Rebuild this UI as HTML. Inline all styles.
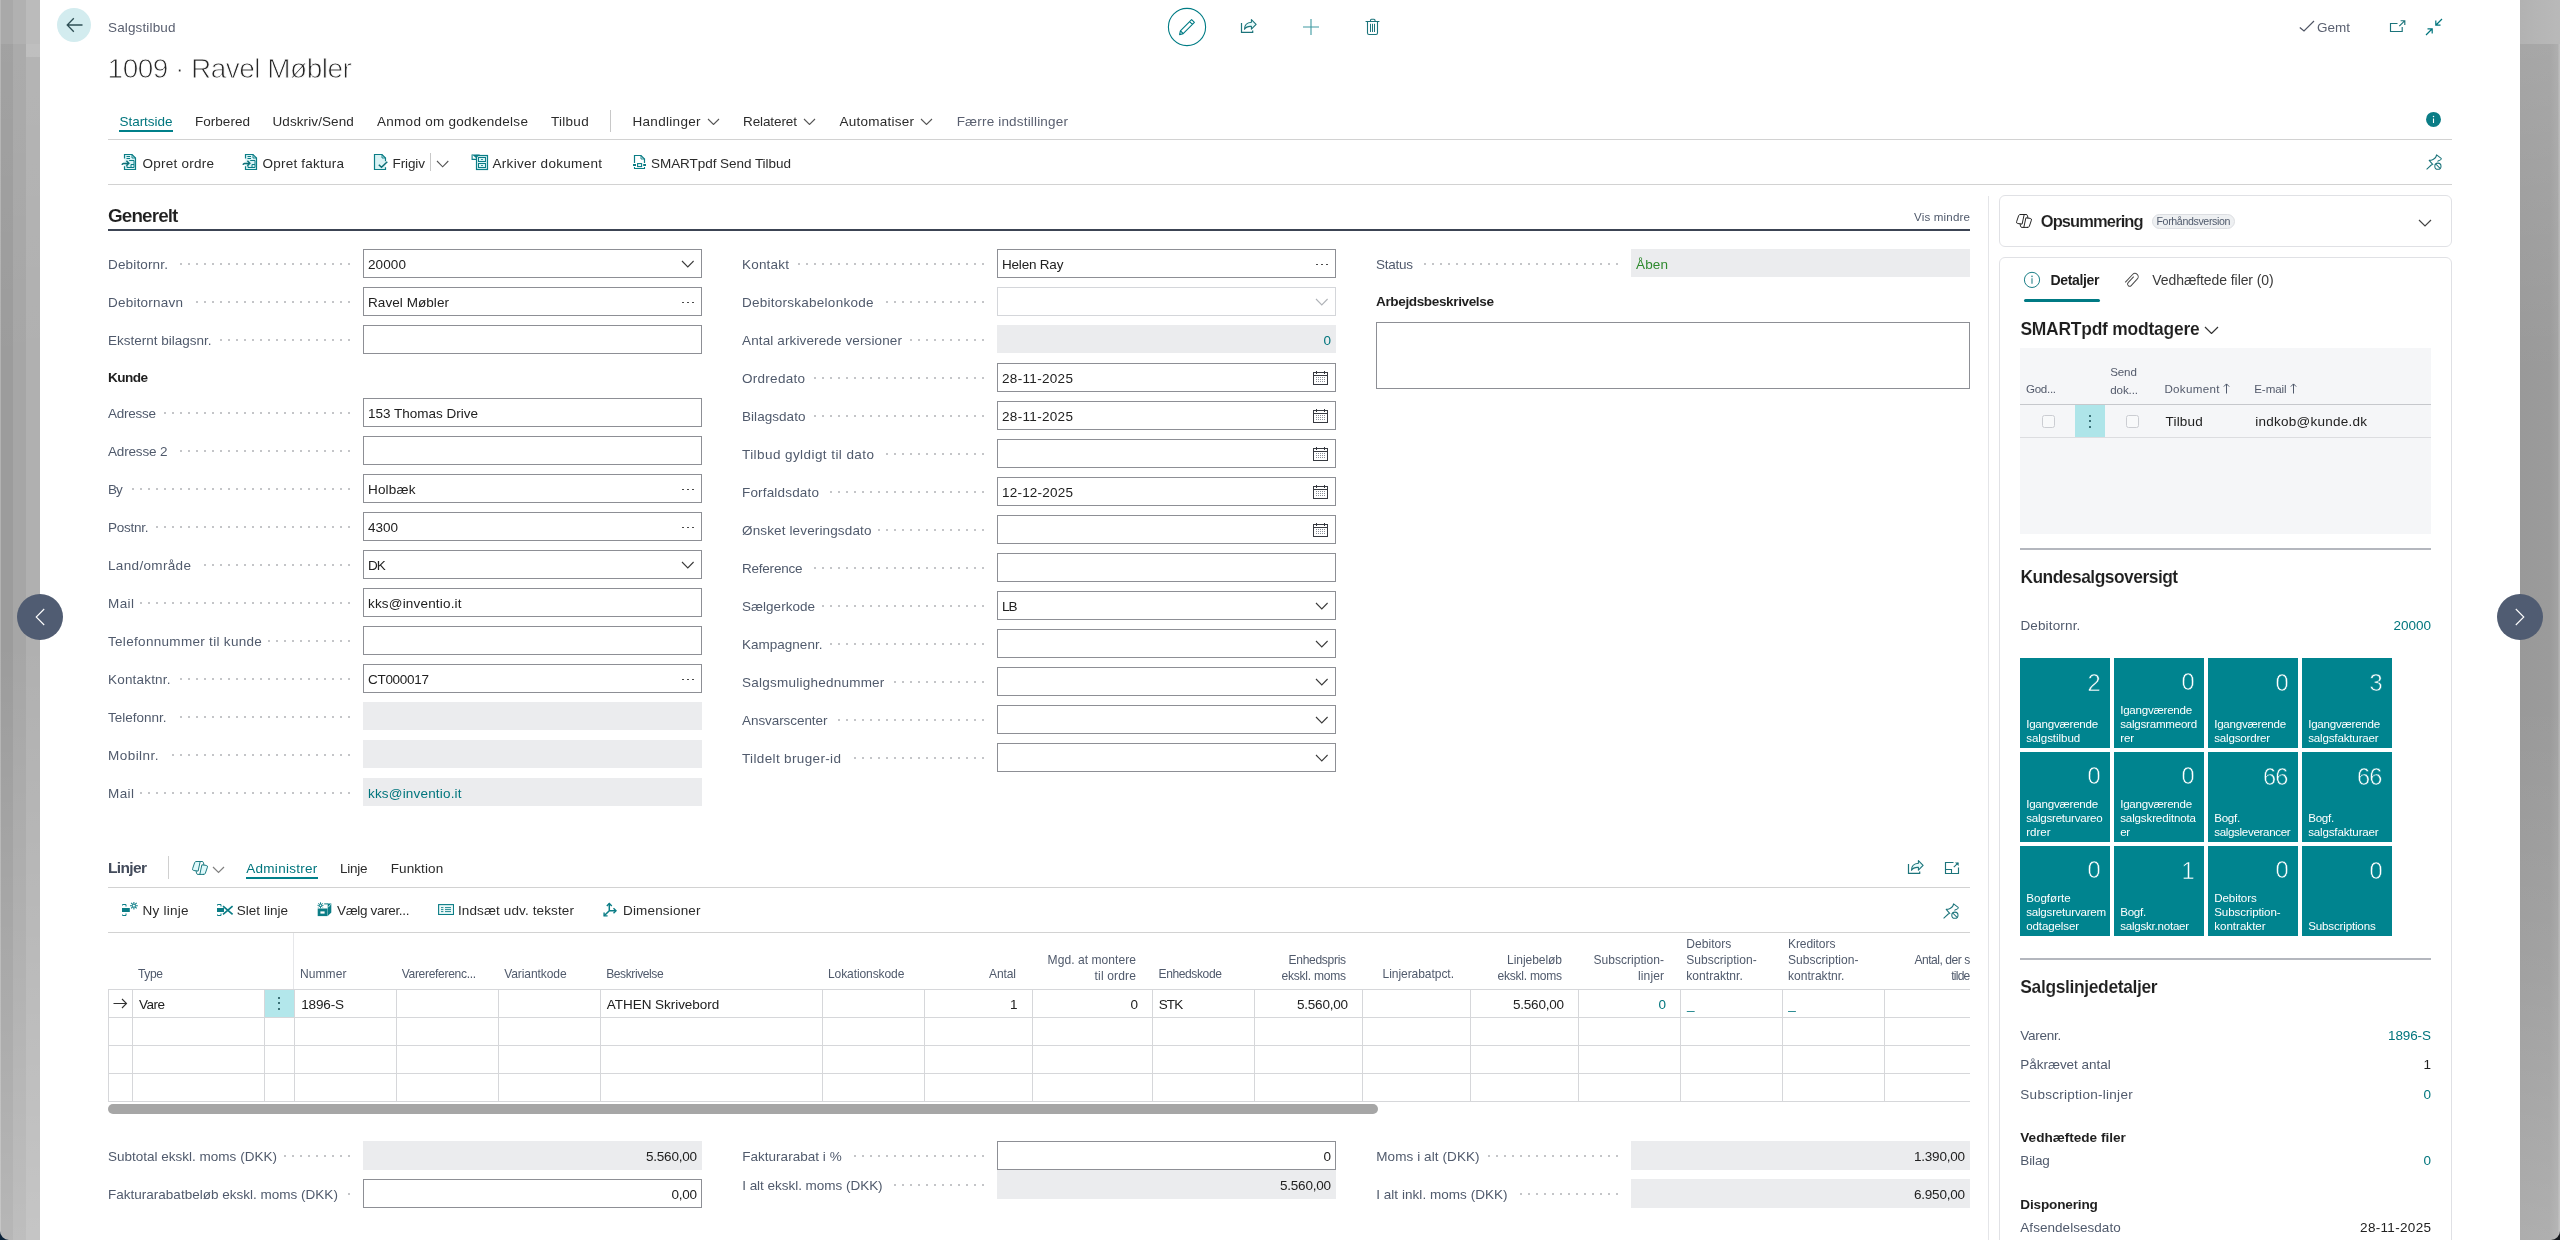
<!DOCTYPE html>
<html lang="da"><head><meta charset="utf-8"><title>Salgstilbud</title>
<style>
html,body{margin:0;padding:0;}
body{width:2560px;height:1240px;position:relative;overflow:hidden;background:#fff;font-family:"Liberation Sans",sans-serif;}
#pg{position:absolute;left:0;top:0;width:2560px;height:1240px;will-change:transform;transform:translateZ(0);}
.t{position:absolute;white-space:nowrap;margin:0;}
.r{position:absolute;box-sizing:border-box;}
.dl{background-image:radial-gradient(circle at 1px 1px,#c4c5c8 0.95px,rgba(255,255,255,0) 1.35px);background-size:8px 2px;background-repeat:repeat-x;}
</style></head><body><div id="pg">
<div class="r" style="left:0;top:0;width:40px;height:1240px;background:linear-gradient(90deg,#b2b2b2 0 1px,#9c9c9c 1px 13px,#a6a6a6 13px 26px,#b0b0b0 26px 40px);"></div>
<div class="r" style="left:0;top:0;width:40px;height:44px;background:linear-gradient(90deg,#b8b8b8 0 1px,#a9a9a9 1px 13px,#b1b1b1 13px 26px,#bbbbbb 26px 40px);"></div>
<div class="r" style="left:0;top:640px;width:40px;height:600px;background:linear-gradient(180deg,rgba(255,255,255,0),rgba(255,255,255,0.12) 50%,rgba(255,255,255,0.27));"></div>
<div class="r" style="left:26px;top:44px;width:14px;height:13px;background:#bbbbbb;"></div>
<div class="r" style="left:2520px;top:0;width:40px;height:1240px;background:linear-gradient(90deg,#999999 0,#9b9b9b 30px,#a3a3a3 38px,#b4b4b4 39px);"></div>
<div class="r" style="left:2520px;top:0;width:40px;height:44px;background:linear-gradient(90deg,#b2b2b2,#b9b9b9);"></div>
<div class="r" style="left:2520px;top:700px;width:40px;height:540px;background:linear-gradient(180deg,rgba(255,255,255,0),rgba(255,255,255,0.08) 50%,rgba(255,255,255,0.2));"></div>
<div class="r" style="left:2520px;top:44px;width:40px;height:330px;background:linear-gradient(180deg,rgba(255,255,255,0.13),rgba(255,255,255,0));"></div>
<div class="r" style="left:0;top:44px;width:40px;height:330px;background:linear-gradient(180deg,rgba(255,255,255,0.06),rgba(255,255,255,0));"></div>
<svg class="r" style="left:0px;top:1231px;" width="9" height="9" viewBox="0 0 9 9" fill="none"><path d="M0 0 A9 9 0 0 0 9 9 H0Z" fill="#0b2239"/></svg>
<svg class="r" style="left:2551px;top:1231px;" width="9" height="9" viewBox="0 0 9 9" fill="none"><path d="M9 0 A9 9 0 0 1 0 9 H9Z" fill="#15181d"/></svg>
<div class="r" style="left:57px;top:8px;width:34px;height:34px;background:#d3ecef;border-radius:17px;"></div>
<svg class="r" style="left:65.5px;top:17px;" width="18" height="16" viewBox="0 0 18 16" fill="none"><path d="M16.5 8H1.5M7.8 1.2L1.2 8L7.8 14.8" stroke="#2f4f55" stroke-width="1.3"/></svg>
<div class="t" style="top:18.00px;font-size:13.51px;line-height:20px;color:#5a6070;letter-spacing:0.140px;left:108.00px;">Salgstilbud</div>
<div class="t" style="top:48.00px;font-size:27.98px;line-height:42px;color:#262626;letter-spacing:-0.511px;left:107.60px;-webkit-text-stroke:0.85px #fff;">1009 · Ravel Møbler</div>
<svg class="r" style="left:1167px;top:7px;" width="40" height="40" viewBox="0 0 40 40" fill="none"><circle cx="20" cy="20" r="18.6" stroke="#007c85" stroke-width="1.1"/><path d="M24.6 12.6 L27.4 15.4 L16.2 26.6 L12.6 27.6 L13.4 23.8 Z M22.6 14.6 L25.4 17.4 M13.6 24 L16 26.4" stroke="#007c85" stroke-width="1.1" stroke-linejoin="round"/></svg>
<svg class="r" style="left:1240px;top:18px;" width="18" height="16" viewBox="0 0 18 16" fill="none"><path d="M1.5 5V14.4H12.7V12.4" stroke="#1c747b" stroke-width="1.2"/><path d="M11.4 1.6L16.1 6.3L11.4 11.2V8.4C8 8.2 5.8 9 4.5 11.3C4.5 7.5 7 4.6 11.4 4.3Z" stroke="#1c747b" stroke-width="1.1" stroke-linejoin="round" fill="#e6fafa"/></svg>
<svg class="r" style="left:1303px;top:19px;" width="16" height="16" viewBox="0 0 16 16" fill="none"><path d="M8 0V16M0 8H16" stroke="#3f9aa1" stroke-width="1.1"/></svg>
<svg class="r" style="left:1365px;top:18px;" width="15" height="18" viewBox="0 0 15 18" fill="none"><path d="M1 3.5H14M5.5 3.5V2.2Q5.5 1.2 6.5 1.2H9Q10 1.2 10 2.2V3.5M2.5 3.5V15Q2.5 16.5 4 16.5H11Q12.5 16.5 12.5 15V3.5" stroke="#1c747b" stroke-width="1.1" stroke-linecap="round"/><path d="M5.5 6.2V13.6M7.5 6.2V13.6M9.5 6.2V13.6" stroke="#1c747b" stroke-width="1" stroke-linecap="round"/></svg>
<svg class="r" style="left:2299px;top:20px;" width="16" height="12" viewBox="0 0 16 12" fill="none"><path d="M0.8 7.5L5 11L15 1" stroke="#4f5564" stroke-width="1.2"/></svg>
<div class="t" style="top:18.00px;font-size:13.51px;line-height:20px;color:#5a6070;letter-spacing:0.000px;left:2317.00px;">Gemt</div>
<svg class="r" style="left:2389px;top:19px;" width="17" height="14" viewBox="0 0 17 14" fill="none"><path d="M8.5 4.5H1.5V12.5H13.2V8" stroke="#1c747b" stroke-width="1.15"/><path d="M10.3 7.2L15.6 1.9M11.6 1.7H15.8V5.9" stroke="#1c747b" stroke-width="1.15"/></svg>
<svg class="r" style="left:2425px;top:18px;" width="18" height="18" viewBox="0 0 18 18" fill="none"><path d="M17 1L11 7M10.8 2.5V7.2H15.5" stroke="#00757d" stroke-width="1.2"/><path d="M1 17L7 11M2.5 10.8H7.2V15.5" stroke="#00757d" stroke-width="1.2"/></svg>
<div class="t" style="top:112.00px;font-size:13.51px;line-height:20px;color:#00757d;letter-spacing:-0.037px;left:119.50px;">Startside</div>
<div class="r" style="left:119px;top:130px;width:54px;height:2px;background:#00808a;"></div>
<div class="t" style="top:112.00px;font-size:13.51px;line-height:20px;color:#2b2b2b;letter-spacing:0.029px;left:195.00px;">Forbered</div>
<div class="t" style="top:112.00px;font-size:13.51px;line-height:20px;color:#2b2b2b;letter-spacing:0.091px;left:272.50px;">Udskriv/Send</div>
<div class="t" style="top:112.00px;font-size:13.51px;line-height:20px;color:#2b2b2b;letter-spacing:0.279px;left:377.00px;">Anmod om godkendelse</div>
<div class="t" style="top:112.00px;font-size:13.51px;line-height:20px;color:#2b2b2b;letter-spacing:0.280px;left:551.00px;">Tilbud</div>
<div class="r" style="left:610px;top:110px;width:1px;height:22px;background:#c8c8c8;"></div>
<div class="t" style="top:112.00px;font-size:13.51px;line-height:20px;color:#2b2b2b;letter-spacing:0.300px;left:632.50px;">Handlinger</div>
<svg class="r" style="left:706.5px;top:117.75px;" width="13" height="7.5" viewBox="0 0 13 7.5" fill="none"><path d="M1 1 L6.5 6.5 L12 1" stroke="#555" stroke-width="1.1"/></svg>
<div class="t" style="top:112.00px;font-size:13.51px;line-height:20px;color:#2b2b2b;letter-spacing:-0.100px;left:743.00px;">Relateret</div>
<svg class="r" style="left:803.0px;top:117.75px;" width="13" height="7.5" viewBox="0 0 13 7.5" fill="none"><path d="M1 1 L6.5 6.5 L12 1" stroke="#555" stroke-width="1.1"/></svg>
<div class="t" style="top:112.00px;font-size:13.51px;line-height:20px;color:#2b2b2b;letter-spacing:0.240px;left:839.50px;">Automatiser</div>
<svg class="r" style="left:920.0px;top:117.75px;" width="13" height="7.5" viewBox="0 0 13 7.5" fill="none"><path d="M1 1 L6.5 6.5 L12 1" stroke="#555" stroke-width="1.1"/></svg>
<div class="t" style="top:112.00px;font-size:13.51px;line-height:20px;color:#5a6070;letter-spacing:0.178px;left:956.70px;">Færre indstillinger</div>
<svg class="r" style="left:2425px;top:111px;" width="17" height="17" viewBox="0 0 17 17" fill="none"><circle cx="8.5" cy="8.4" r="7.5" fill="#0b7d86"/><path d="M8.5 7.5V12" stroke="#fff" stroke-width="1.1"/><circle cx="8.5" cy="5.5" r="0.75" fill="#fff"/></svg>
<div class="r" style="left:108px;top:139px;width:2344px;height:1px;background:#d2d2d2;"></div>
<svg class="r" style="left:121px;top:153px;" width="16" height="18" viewBox="0 0 16 18" fill="none"><path d="M3.5 5.5V1.5H11L14.5 5V16.5H3.5V13.2" stroke="#0b7d86" stroke-width="1.2" fill="#d9f3f5"/><path d="M11 1.5V5H14.5" stroke="#0b7d86" stroke-width="0.9"/><path d="M5.5 3.5H9M5.5 5.5H9" stroke="#0b7d86" stroke-width="1"/><path d="M8.2 7.5H13V14.5H6V12.8M10 14.5V11.5H13" stroke="#0b7d86" stroke-width="1"/><path d="M1 11.8C1.3 10.2 2.5 10.3 7.6 10.3M5.4 7.8L7.9 10.3L5.4 12.8" stroke="#0b6f77" stroke-width="1.4"/></svg>
<div class="t" style="top:154.00px;font-size:13.51px;line-height:20px;color:#2b2b2b;letter-spacing:0.240px;left:142.50px;">Opret ordre</div>
<svg class="r" style="left:241.5px;top:153px;" width="16" height="18" viewBox="0 0 16 18" fill="none"><path d="M3.5 5.5V1.5H11L14.5 5V16.5H3.5V13.2" stroke="#0b7d86" stroke-width="1.2" fill="#d9f3f5"/><path d="M11 1.5V5H14.5" stroke="#0b7d86" stroke-width="0.9"/><path d="M5.5 3.5H9M5.5 5.5H9" stroke="#0b7d86" stroke-width="1"/><path d="M8.2 7.5H13V14.5H6V12.8M10 14.5V11.5H13" stroke="#0b7d86" stroke-width="1"/><path d="M1 11.8C1.3 10.2 2.5 10.3 7.6 10.3M5.4 7.8L7.9 10.3L5.4 12.8" stroke="#0b6f77" stroke-width="1.4"/></svg>
<div class="t" style="top:154.00px;font-size:13.51px;line-height:20px;color:#2b2b2b;letter-spacing:0.217px;left:262.50px;">Opret faktura</div>
<svg class="r" style="left:373px;top:153px;" width="16" height="18" viewBox="0 0 16 18" fill="none"><path d="M12.5 8.3V5L9 1.5H1.5V16.5H12.5V14.2" stroke="#0b7d86" stroke-width="1.2" fill="#d9f3f5"/><path d="M9 1.5V5H12.5" stroke="#0b7d86" stroke-width="0.9"/><path d="M5.8 11.8L8.5 14.3L14.3 8.8" stroke="#0b6f77" stroke-width="1.5"/></svg>
<div class="t" style="top:154.00px;font-size:13.51px;line-height:20px;color:#2b2b2b;letter-spacing:-0.120px;left:392.50px;">Frigiv</div>
<div class="r" style="left:430px;top:153px;width:1px;height:18px;background:#c8c8c8;"></div>
<svg class="r" style="left:435.55px;top:160.1px;" width="13.3" height="7.8" viewBox="0 0 13.3 7.8" fill="none"><path d="M1 1 L6.65 6.8 L12.3 1" stroke="#555" stroke-width="1.1"/></svg>
<svg class="r" style="left:471px;top:153px;" width="18" height="18" viewBox="0 0 18 18" fill="none"><rect x="5.5" y="2.5" width="11" height="14" stroke="#0b7d86" stroke-width="1.2" fill="#d9f3f5"/><rect x="7.5" y="4.5" width="7" height="4" stroke="#0b7d86" stroke-width="1"/><rect x="7.5" y="10.5" width="7" height="4" stroke="#0b7d86" stroke-width="1"/><path d="M10.2 6.5H11.8M10.2 12.5H11.8" stroke="#0b7d86" stroke-width="1"/><path d="M1 1.4H9L5 4.9Z" fill="#0b7d86"/><path d="M1.1 1.5V6.4H5.5" stroke="#0b7d86" stroke-width="1.1"/></svg>
<div class="t" style="top:154.00px;font-size:13.51px;line-height:20px;color:#2b2b2b;letter-spacing:0.293px;left:492.50px;">Arkiver dokument</div>
<svg class="r" style="left:632px;top:154px;" width="16" height="16" viewBox="0 0 16 16" fill="none"><path d="M2.5 9V1.5H9L12.5 5V9" stroke="#0b7d86" stroke-width="1.2"/><path d="M9 1.5V5H12.5" stroke="#0b7d86" stroke-width="0.9"/><path d="M1 11H4M11.2 11H14" stroke="#0b7d86" stroke-width="1.8"/><rect x="5.6" y="9.6" width="4" height="3" stroke="#0b7d86" stroke-width="1.1"/><path d="M2.5 13V14.5H12.5V13" stroke="#0b7d86" stroke-width="1.1"/></svg>
<div class="t" style="top:154.00px;font-size:13.51px;line-height:20px;color:#2b2b2b;letter-spacing:-0.047px;left:651.00px;">SMARTpdf Send Tilbud</div>
<svg class="r" style="left:2425.5px;top:154.3px;" width="17" height="17" viewBox="0 0 17 17" fill="none"><path d="M15.5 4.7L10.6 0.9C10.4 2.6 9 4.6 7.1 5.4C5.8 6 4.5 6.3 3.2 6.3L7.1 10.9" stroke="#1c747b" stroke-width="1.05" stroke-linejoin="round"/><path d="M15.5 4.7C15.2 5.6 14.4 6.2 13.2 6.4C12.3 6.6 11.8 7 11.6 7.7M5.8 10.5L0.6 15.4" stroke="#1c747b" stroke-width="1.05"/><circle cx="11.9" cy="12.2" r="3.1" stroke="#1c747b" stroke-width="1.05"/><path d="M9.7 10L14.1 14.4" stroke="#1c747b" stroke-width="1.05"/></svg>
<div class="r" style="left:108px;top:184px;width:2344px;height:1px;background:#d2d2d2;"></div>
<div class="t" style="top:202.00px;font-size:18.91px;line-height:28px;color:#1f1f1f;font-weight:bold;letter-spacing:-0.900px;left:108.00px;-webkit-text-stroke:0.1px #fff;">Generelt</div>
<div class="t" style="top:209.00px;font-size:11.58px;line-height:17px;color:#505a6c;letter-spacing:0.167px;right:589.84px;">Vis mindre</div>
<div class="r" style="left:108px;top:229px;width:1862px;height:2px;background:#3c4454;"></div>
<div class="t" style="top:255.00px;font-size:13.51px;line-height:20px;color:#505a6c;letter-spacing:0.156px;left:108.00px;">Debitornr.</div>
<div class="r dl" style="left:180.2px;top:263px;width:170.0px;height:2px;"></div>
<div class="r" style="left:363px;top:249px;width:339px;height:29px;background:#fff;border:1px solid #8d8f95;"></div>
<div class="t" style="top:255.00px;font-size:13.51px;line-height:20px;color:#212121;letter-spacing:0.100px;left:368.00px;">20000</div>
<svg class="r" style="left:681.2px;top:259.7px;" width="13.6" height="8" viewBox="0 0 13.6 8" fill="none"><path d="M1 1 L6.8 7 L12.6 1" stroke="#3a3a3a" stroke-width="1.1"/></svg>
<div class="t" style="top:293.00px;font-size:13.51px;line-height:20px;color:#505a6c;letter-spacing:0.220px;left:108.00px;">Debitornavn</div>
<div class="r dl" style="left:196.2px;top:301px;width:154.0px;height:2px;"></div>
<div class="r" style="left:363px;top:287px;width:339px;height:29px;background:#fff;border:1px solid #8d8f95;"></div>
<div class="t" style="top:293.00px;font-size:13.51px;line-height:20px;color:#212121;letter-spacing:0.064px;left:368.00px;">Ravel Møbler</div>
<div class="r" style="left:682.2px;top:301.6px;width:1.7px;height:1.7px;background:#333;border-radius:0.85px;"></div>
<div class="r" style="left:687.2px;top:301.6px;width:1.7px;height:1.7px;background:#333;border-radius:0.85px;"></div>
<div class="r" style="left:692.2px;top:301.6px;width:1.7px;height:1.7px;background:#333;border-radius:0.85px;"></div>
<div class="t" style="top:331.00px;font-size:13.51px;line-height:20px;color:#505a6c;letter-spacing:-0.006px;left:108.00px;">Eksternt bilagsnr.</div>
<div class="r dl" style="left:220.2px;top:339px;width:130.0px;height:2px;"></div>
<div class="r" style="left:363px;top:325px;width:339px;height:29px;background:#fff;border:1px solid #8d8f95;"></div>
<div class="t" style="top:368.00px;font-size:13.58px;line-height:20px;color:#1f1f1f;font-weight:bold;letter-spacing:-0.550px;left:108.00px;">Kunde</div>
<div class="t" style="top:404.00px;font-size:13.51px;line-height:20px;color:#505a6c;letter-spacing:-0.267px;left:108.00px;">Adresse</div>
<div class="r dl" style="left:164.2px;top:412px;width:186.0px;height:2px;"></div>
<div class="r" style="left:363px;top:398px;width:339px;height:29px;background:#fff;border:1px solid #8d8f95;"></div>
<div class="t" style="top:404.00px;font-size:13.51px;line-height:20px;color:#212121;letter-spacing:-0.007px;left:368.00px;">153 Thomas Drive</div>
<div class="t" style="top:442.00px;font-size:13.51px;line-height:20px;color:#505a6c;letter-spacing:-0.162px;left:108.00px;">Adresse 2</div>
<div class="r dl" style="left:180.2px;top:450px;width:170.0px;height:2px;"></div>
<div class="r" style="left:363px;top:436px;width:339px;height:29px;background:#fff;border:1px solid #8d8f95;"></div>
<div class="t" style="top:480.00px;font-size:13.51px;line-height:20px;color:#505a6c;letter-spacing:-0.900px;left:108.00px;">By</div>
<div class="r dl" style="left:132.2px;top:488px;width:218.0px;height:2px;"></div>
<div class="r" style="left:363px;top:474px;width:339px;height:29px;background:#fff;border:1px solid #8d8f95;"></div>
<div class="t" style="top:480.00px;font-size:13.51px;line-height:20px;color:#212121;letter-spacing:0.180px;left:368.00px;">Holbæk</div>
<div class="r" style="left:682.2px;top:488.6px;width:1.7px;height:1.7px;background:#333;border-radius:0.85px;"></div>
<div class="r" style="left:687.2px;top:488.6px;width:1.7px;height:1.7px;background:#333;border-radius:0.85px;"></div>
<div class="r" style="left:692.2px;top:488.6px;width:1.7px;height:1.7px;background:#333;border-radius:0.85px;"></div>
<div class="t" style="top:518.00px;font-size:13.51px;line-height:20px;color:#505a6c;letter-spacing:-0.267px;left:108.00px;">Postnr.</div>
<div class="r dl" style="left:156.2px;top:526px;width:194.0px;height:2px;"></div>
<div class="r" style="left:363px;top:512px;width:339px;height:29px;background:#fff;border:1px solid #8d8f95;"></div>
<div class="t" style="top:518.00px;font-size:13.51px;line-height:20px;color:#212121;letter-spacing:-0.033px;left:368.00px;">4300</div>
<div class="r" style="left:682.2px;top:526.6px;width:1.7px;height:1.7px;background:#333;border-radius:0.85px;"></div>
<div class="r" style="left:687.2px;top:526.6px;width:1.7px;height:1.7px;background:#333;border-radius:0.85px;"></div>
<div class="r" style="left:692.2px;top:526.6px;width:1.7px;height:1.7px;background:#333;border-radius:0.85px;"></div>
<div class="t" style="top:556.00px;font-size:13.51px;line-height:20px;color:#505a6c;letter-spacing:0.340px;left:108.00px;">Land/område</div>
<div class="r dl" style="left:204.2px;top:564px;width:146.0px;height:2px;"></div>
<div class="r" style="left:363px;top:550px;width:339px;height:29px;background:#fff;border:1px solid #8d8f95;"></div>
<div class="t" style="top:556.00px;font-size:13.51px;line-height:20px;color:#212121;letter-spacing:-0.900px;left:368.00px;">DK</div>
<svg class="r" style="left:681.2px;top:560.7px;" width="13.6" height="8" viewBox="0 0 13.6 8" fill="none"><path d="M1 1 L6.8 7 L12.6 1" stroke="#3a3a3a" stroke-width="1.1"/></svg>
<div class="t" style="top:594.00px;font-size:13.51px;line-height:20px;color:#505a6c;letter-spacing:0.400px;left:108.00px;">Mail</div>
<div class="r dl" style="left:140.2px;top:602px;width:210.0px;height:2px;"></div>
<div class="r" style="left:363px;top:588px;width:339px;height:29px;background:#fff;border:1px solid #8d8f95;"></div>
<div class="t" style="top:594.00px;font-size:13.51px;line-height:20px;color:#212121;letter-spacing:0.179px;left:368.00px;">kks@inventio.it</div>
<div class="t" style="top:632.00px;font-size:13.51px;line-height:20px;color:#505a6c;letter-spacing:0.309px;left:108.00px;">Telefonnummer til kunde</div>
<div class="r dl" style="left:268.2px;top:640px;width:82.0px;height:2px;"></div>
<div class="r" style="left:363px;top:626px;width:339px;height:29px;background:#fff;border:1px solid #8d8f95;"></div>
<div class="t" style="top:670.00px;font-size:13.51px;line-height:20px;color:#505a6c;letter-spacing:0.189px;left:108.00px;">Kontaktnr.</div>
<div class="r dl" style="left:180.2px;top:678px;width:170.0px;height:2px;"></div>
<div class="r" style="left:363px;top:664px;width:339px;height:29px;background:#fff;border:1px solid #8d8f95;"></div>
<div class="t" style="top:670.00px;font-size:13.51px;line-height:20px;color:#212121;letter-spacing:-0.300px;left:368.00px;">CT000017</div>
<div class="r" style="left:682.2px;top:678.6px;width:1.7px;height:1.7px;background:#333;border-radius:0.85px;"></div>
<div class="r" style="left:687.2px;top:678.6px;width:1.7px;height:1.7px;background:#333;border-radius:0.85px;"></div>
<div class="r" style="left:692.2px;top:678.6px;width:1.7px;height:1.7px;background:#333;border-radius:0.85px;"></div>
<div class="t" style="top:708.00px;font-size:13.51px;line-height:20px;color:#505a6c;letter-spacing:-0.011px;left:108.00px;">Telefonnr.</div>
<div class="r dl" style="left:180.2px;top:716px;width:170.0px;height:2px;"></div>
<div class="r" style="left:363px;top:702px;width:339px;height:28px;background:#ebecee;"></div>
<div class="t" style="top:746.00px;font-size:13.51px;line-height:20px;color:#505a6c;letter-spacing:0.457px;left:108.00px;">Mobilnr.</div>
<div class="r dl" style="left:172.2px;top:754px;width:178.0px;height:2px;"></div>
<div class="r" style="left:363px;top:740px;width:339px;height:28px;background:#ebecee;"></div>
<div class="t" style="top:784.00px;font-size:13.51px;line-height:20px;color:#505a6c;letter-spacing:0.400px;left:108.00px;">Mail</div>
<div class="r dl" style="left:140.2px;top:792px;width:210.0px;height:2px;"></div>
<div class="r" style="left:363px;top:778px;width:339px;height:28px;background:#ebecee;"></div>
<div class="t" style="top:784.00px;font-size:13.51px;line-height:20px;color:#00757d;letter-spacing:0.179px;left:368.00px;">kks@inventio.it</div>
<div class="t" style="top:255.00px;font-size:13.51px;line-height:20px;color:#505a6c;letter-spacing:0.200px;left:742.00px;">Kontakt</div>
<div class="r dl" style="left:798.2px;top:263px;width:186.0px;height:2px;"></div>
<div class="r" style="left:997px;top:249px;width:339px;height:29px;background:#fff;border:1px solid #8d8f95;"></div>
<div class="t" style="top:255.00px;font-size:13.51px;line-height:20px;color:#212121;letter-spacing:-0.200px;left:1002.00px;">Helen Ray</div>
<div class="r" style="left:1316.2px;top:263.6px;width:1.7px;height:1.7px;background:#333;border-radius:0.85px;"></div>
<div class="r" style="left:1321.2px;top:263.6px;width:1.7px;height:1.7px;background:#333;border-radius:0.85px;"></div>
<div class="r" style="left:1326.2px;top:263.6px;width:1.7px;height:1.7px;background:#333;border-radius:0.85px;"></div>
<div class="t" style="top:293.00px;font-size:13.51px;line-height:20px;color:#505a6c;letter-spacing:0.256px;left:742.00px;">Debitorskabelonkode</div>
<div class="r dl" style="left:886.2px;top:301px;width:98.0px;height:2px;"></div>
<div class="r" style="left:997px;top:287px;width:339px;height:29px;background:#fff;border:1px solid #d4d6da;"></div>
<svg class="r" style="left:1315.2px;top:297.7px;" width="13.6" height="8" viewBox="0 0 13.6 8" fill="none"><path d="M1 1 L6.8 7 L12.6 1" stroke="#b0b3b8" stroke-width="1.1"/></svg>
<div class="t" style="top:331.00px;font-size:13.51px;line-height:20px;color:#505a6c;letter-spacing:0.124px;left:742.00px;">Antal arkiverede versioner</div>
<div class="r dl" style="left:910.2px;top:339px;width:74.0px;height:2px;"></div>
<div class="r" style="left:997px;top:325px;width:339px;height:28px;background:#ebecee;"></div>
<div class="t" style="top:331.00px;font-size:13.51px;line-height:20px;color:#00757d;right:1228.99px;">0</div>
<div class="t" style="top:369.00px;font-size:13.51px;line-height:20px;color:#505a6c;letter-spacing:0.275px;left:742.00px;">Ordredato</div>
<div class="r dl" style="left:814.2px;top:377px;width:170.0px;height:2px;"></div>
<div class="r" style="left:997px;top:363px;width:339px;height:29px;background:#fff;border:1px solid #8d8f95;"></div>
<div class="t" style="top:369.00px;font-size:13.51px;line-height:20px;color:#212121;letter-spacing:0.322px;left:1002.00px;">28-11-2025</div>
<svg class="r" style="left:1313.0px;top:371px;" width="15" height="14" viewBox="0 0 15 14" fill="none"><rect x="0.5" y="1.5" width="14" height="12" stroke="#363940" stroke-width="1"/><path d="M0.5 4.5H14.5" stroke="#363940" stroke-width="1"/><path d="M3.5 0V3M11.5 0V3" stroke="#363940" stroke-width="1"/><path d="M3 6.5H12M3 8.5H12M3 10.5H12" stroke="#8a8f98" stroke-width="1" stroke-dasharray="1 1"/></svg>
<div class="t" style="top:407.00px;font-size:13.51px;line-height:20px;color:#505a6c;letter-spacing:0.044px;left:742.00px;">Bilagsdato</div>
<div class="r dl" style="left:814.2px;top:415px;width:170.0px;height:2px;"></div>
<div class="r" style="left:997px;top:401px;width:339px;height:29px;background:#fff;border:1px solid #8d8f95;"></div>
<div class="t" style="top:407.00px;font-size:13.51px;line-height:20px;color:#212121;letter-spacing:0.322px;left:1002.00px;">28-11-2025</div>
<svg class="r" style="left:1313.0px;top:409px;" width="15" height="14" viewBox="0 0 15 14" fill="none"><rect x="0.5" y="1.5" width="14" height="12" stroke="#363940" stroke-width="1"/><path d="M0.5 4.5H14.5" stroke="#363940" stroke-width="1"/><path d="M3.5 0V3M11.5 0V3" stroke="#363940" stroke-width="1"/><path d="M3 6.5H12M3 8.5H12M3 10.5H12" stroke="#8a8f98" stroke-width="1" stroke-dasharray="1 1"/></svg>
<div class="t" style="top:445.00px;font-size:13.51px;line-height:20px;color:#505a6c;letter-spacing:0.427px;left:742.00px;">Tilbud gyldigt til dato</div>
<div class="r dl" style="left:886.2px;top:453px;width:98.0px;height:2px;"></div>
<div class="r" style="left:997px;top:439px;width:339px;height:29px;background:#fff;border:1px solid #8d8f95;"></div>
<svg class="r" style="left:1313.0px;top:447px;" width="15" height="14" viewBox="0 0 15 14" fill="none"><rect x="0.5" y="1.5" width="14" height="12" stroke="#363940" stroke-width="1"/><path d="M0.5 4.5H14.5" stroke="#363940" stroke-width="1"/><path d="M3.5 0V3M11.5 0V3" stroke="#363940" stroke-width="1"/><path d="M3 6.5H12M3 8.5H12M3 10.5H12" stroke="#8a8f98" stroke-width="1" stroke-dasharray="1 1"/></svg>
<div class="t" style="top:483.00px;font-size:13.51px;line-height:20px;color:#505a6c;letter-spacing:0.173px;left:742.00px;">Forfaldsdato</div>
<div class="r dl" style="left:830.2px;top:491px;width:154.0px;height:2px;"></div>
<div class="r" style="left:997px;top:477px;width:339px;height:29px;background:#fff;border:1px solid #8d8f95;"></div>
<div class="t" style="top:483.00px;font-size:13.51px;line-height:20px;color:#212121;letter-spacing:0.211px;left:1002.00px;">12-12-2025</div>
<svg class="r" style="left:1313.0px;top:485px;" width="15" height="14" viewBox="0 0 15 14" fill="none"><rect x="0.5" y="1.5" width="14" height="12" stroke="#363940" stroke-width="1"/><path d="M0.5 4.5H14.5" stroke="#363940" stroke-width="1"/><path d="M3.5 0V3M11.5 0V3" stroke="#363940" stroke-width="1"/><path d="M3 6.5H12M3 8.5H12M3 10.5H12" stroke="#8a8f98" stroke-width="1" stroke-dasharray="1 1"/></svg>
<div class="t" style="top:521.00px;font-size:13.51px;line-height:20px;color:#505a6c;letter-spacing:0.137px;left:742.00px;">Ønsket leveringsdato</div>
<div class="r dl" style="left:878.2px;top:529px;width:106.0px;height:2px;"></div>
<div class="r" style="left:997px;top:515px;width:339px;height:29px;background:#fff;border:1px solid #8d8f95;"></div>
<svg class="r" style="left:1313.0px;top:523px;" width="15" height="14" viewBox="0 0 15 14" fill="none"><rect x="0.5" y="1.5" width="14" height="12" stroke="#363940" stroke-width="1"/><path d="M0.5 4.5H14.5" stroke="#363940" stroke-width="1"/><path d="M3.5 0V3M11.5 0V3" stroke="#363940" stroke-width="1"/><path d="M3 6.5H12M3 8.5H12M3 10.5H12" stroke="#8a8f98" stroke-width="1" stroke-dasharray="1 1"/></svg>
<div class="t" style="top:559.00px;font-size:13.51px;line-height:20px;color:#505a6c;letter-spacing:-0.225px;left:742.00px;">Reference</div>
<div class="r dl" style="left:814.2px;top:567px;width:170.0px;height:2px;"></div>
<div class="r" style="left:997px;top:553px;width:339px;height:29px;background:#fff;border:1px solid #8d8f95;"></div>
<div class="t" style="top:597.00px;font-size:13.51px;line-height:20px;color:#505a6c;letter-spacing:0.022px;left:742.00px;">Sælgerkode</div>
<div class="r dl" style="left:822.2px;top:605px;width:162.0px;height:2px;"></div>
<div class="r" style="left:997px;top:591px;width:339px;height:29px;background:#fff;border:1px solid #8d8f95;"></div>
<div class="t" style="top:597.00px;font-size:13.51px;line-height:20px;color:#212121;letter-spacing:-0.900px;left:1002.00px;">LB</div>
<svg class="r" style="left:1315.2px;top:601.7px;" width="13.6" height="8" viewBox="0 0 13.6 8" fill="none"><path d="M1 1 L6.8 7 L12.6 1" stroke="#3a3a3a" stroke-width="1.1"/></svg>
<div class="t" style="top:635.00px;font-size:13.51px;line-height:20px;color:#505a6c;letter-spacing:0.010px;left:742.00px;">Kampagnenr.</div>
<div class="r dl" style="left:830.2px;top:643px;width:154.0px;height:2px;"></div>
<div class="r" style="left:997px;top:629px;width:339px;height:29px;background:#fff;border:1px solid #8d8f95;"></div>
<svg class="r" style="left:1315.2px;top:639.7px;" width="13.6" height="8" viewBox="0 0 13.6 8" fill="none"><path d="M1 1 L6.8 7 L12.6 1" stroke="#3a3a3a" stroke-width="1.1"/></svg>
<div class="t" style="top:673.00px;font-size:13.51px;line-height:20px;color:#505a6c;letter-spacing:0.239px;left:742.00px;">Salgsmulighednummer</div>
<div class="r dl" style="left:894.2px;top:681px;width:90.0px;height:2px;"></div>
<div class="r" style="left:997px;top:667px;width:339px;height:29px;background:#fff;border:1px solid #8d8f95;"></div>
<svg class="r" style="left:1315.2px;top:677.7px;" width="13.6" height="8" viewBox="0 0 13.6 8" fill="none"><path d="M1 1 L6.8 7 L12.6 1" stroke="#3a3a3a" stroke-width="1.1"/></svg>
<div class="t" style="top:711.00px;font-size:13.51px;line-height:20px;color:#505a6c;letter-spacing:-0.067px;left:742.00px;">Ansvarscenter</div>
<div class="r dl" style="left:838.2px;top:719px;width:146.0px;height:2px;"></div>
<div class="r" style="left:997px;top:705px;width:339px;height:29px;background:#fff;border:1px solid #8d8f95;"></div>
<svg class="r" style="left:1315.2px;top:715.7px;" width="13.6" height="8" viewBox="0 0 13.6 8" fill="none"><path d="M1 1 L6.8 7 L12.6 1" stroke="#3a3a3a" stroke-width="1.1"/></svg>
<div class="t" style="top:749.00px;font-size:13.51px;line-height:20px;color:#505a6c;letter-spacing:0.356px;left:742.00px;">Tildelt bruger-id</div>
<div class="r dl" style="left:854.2px;top:757px;width:130.0px;height:2px;"></div>
<div class="r" style="left:997px;top:743px;width:339px;height:29px;background:#fff;border:1px solid #8d8f95;"></div>
<svg class="r" style="left:1315.2px;top:753.7px;" width="13.6" height="8" viewBox="0 0 13.6 8" fill="none"><path d="M1 1 L6.8 7 L12.6 1" stroke="#3a3a3a" stroke-width="1.1"/></svg>
<div class="t" style="top:255.00px;font-size:13.51px;line-height:20px;color:#505a6c;letter-spacing:-0.260px;left:1376.00px;">Status</div>
<div class="r dl" style="left:1424.2px;top:263px;width:194.0px;height:2px;"></div>
<div class="r" style="left:1631px;top:249px;width:339px;height:28px;background:#ebecee;"></div>
<div class="t" style="top:255.00px;font-size:13.51px;line-height:20px;color:#2e8a2e;letter-spacing:0.167px;left:1636.00px;">Åben</div>
<div class="t" style="top:292.00px;font-size:13.58px;line-height:20px;color:#1f1f1f;font-weight:bold;letter-spacing:-0.388px;left:1376.00px;">Arbejdsbeskrivelse</div>
<div class="r" style="left:1376px;top:322px;width:594px;height:67px;background:#fff;border:1px solid #8d8f95;"></div>
<div class="r" style="left:1988px;top:196px;width:1px;height:1044px;background:#e4e5e8;"></div>
<div class="r" style="left:17px;top:594px;width:46px;height:46px;background:#505c72;border-radius:23px;"></div>
<svg class="r" style="left:35px;top:608px;" width="10" height="18" viewBox="0 0 10 18" fill="none"><path d="M9.2 1L1.2 9L9.2 17" stroke="#fff" stroke-width="1.1"/></svg>
<div class="r" style="left:2497px;top:594px;width:46px;height:46px;background:#505c72;border-radius:23px;"></div>
<svg class="r" style="left:2515.4px;top:608px;" width="10" height="18" viewBox="0 0 10 18" fill="none"><path d="M0.8 1L8.8 9L0.8 17" stroke="#fff" stroke-width="1.1"/></svg>
<div class="t" style="top:856.00px;font-size:15.52px;line-height:23px;color:#434b5b;font-weight:bold;letter-spacing:-0.660px;left:108.00px;">Linjer</div>
<div class="r" style="left:168px;top:856px;width:1px;height:23px;background:#d0d0d0;"></div>
<svg class="r" style="left:192px;top:861px;" width="16" height="14" viewBox="0 0 16 14" fill="none"><g stroke="#1c7b82" stroke-width="1.0" stroke-linejoin="round" stroke-linecap="round" fill="none"><path d="M4.3 0.5H8.2L6.1 10.1L1.7 9.5Q0.1 9.2 0.6 7.7L2.7 1.5Q3.1 0.5 4.3 0.5Z" fill="rgba(190,244,247,0.5)"/><path d="M8.2 0.5H10Q11.3 0.5 11.5 1.7L11.9 3.9"/><g transform="rotate(180 8 6.95)"><path d="M4.3 0.5H8.2L6.1 10.1L1.7 9.5Q0.1 9.2 0.6 7.7L2.7 1.5Q3.1 0.5 4.3 0.5Z" fill="rgba(190,244,247,0.5)"/><path d="M8.2 0.5H10Q11.3 0.5 11.5 1.7L11.9 3.9"/></g></g></svg>
<svg class="r" style="left:211.5px;top:866.25px;" width="13" height="7.5" viewBox="0 0 13 7.5" fill="none"><path d="M1 1 L6.5 6.5 L12 1" stroke="#808080" stroke-width="1.2"/></svg>
<div class="t" style="top:859.00px;font-size:13.51px;line-height:20px;color:#00757d;letter-spacing:0.270px;left:246.30px;">Administrer</div>
<div class="r" style="left:246px;top:877px;width:72px;height:2px;background:#00808a;"></div>
<div class="t" style="top:859.00px;font-size:13.51px;line-height:20px;color:#2b2b2b;letter-spacing:-0.250px;left:340.00px;">Linje</div>
<div class="t" style="top:859.00px;font-size:13.51px;line-height:20px;color:#2b2b2b;letter-spacing:0.100px;left:390.70px;">Funktion</div>
<svg class="r" style="left:1906.5px;top:859px;" width="18" height="16" viewBox="0 0 18 16" fill="none"><path d="M1.5 5V14.4H12.7V12.4" stroke="#1c747b" stroke-width="1.2"/><path d="M11.4 1.6L16.1 6.3L11.4 11.2V8.4C8 8.2 5.8 9 4.5 11.3C4.5 7.5 7 4.6 11.4 4.3Z" stroke="#1c747b" stroke-width="1.1" stroke-linejoin="round" fill="#e6fafa"/></svg>
<svg class="r" style="left:1944px;top:860px;" width="16" height="15" viewBox="0 0 16 15" fill="none"><path d="M9.5 2.5H1.5V13.5H14.5V7.5" stroke="#1c747b" stroke-width="1.15"/><path d="M1.5 9.5H7.5V13.5" stroke="#1c747b" stroke-width="1.1"/><path d="M9.8 7.2L14.2 2.8" stroke="#1c747b" stroke-width="1.1"/><path d="M11 2.4H14.6V6Z" fill="#1c747b"/></svg>
<div class="r" style="left:108px;top:887px;width:1862px;height:1px;background:#d2d2d2;"></div>
<svg class="r" style="left:121px;top:902px;" width="18" height="16" viewBox="0 0 18 16" fill="none"><path d="M1.5 3.5V2.5H5V4.5M1.5 12.5V13.5H5V11.5" stroke="#0b7d86" stroke-width="1"/><rect x="1" y="6" width="7.8" height="4" fill="#0b7d86"/><path d="M9.0 3.7H16.8M12.9 -0.19999999999999973V7.6M10.14 0.94L15.66 6.46M15.66 0.94L10.14 6.46" stroke="#0b7d86" stroke-width="1.05"/><circle cx="12.9" cy="3.7" r="1.48" fill="#fff" stroke="#0b7d86" stroke-width="0.7"/></svg>
<div class="t" style="top:901.00px;font-size:13.51px;line-height:20px;color:#2b2b2b;letter-spacing:0.243px;left:142.50px;">Ny linje</div>
<svg class="r" style="left:216px;top:902px;" width="18" height="16" viewBox="0 0 18 16" fill="none"><path d="M1.5 3.5V2.5H5V4.5M1.5 12.5V13.5H5V11.5" stroke="#0b7d86" stroke-width="1"/><rect x="1" y="6" width="7" height="4" fill="#0b7d86"/><path d="M7 4.2L16.6 12.4M16.6 4.2L7 12.4" stroke="#0b7d86" stroke-width="1.7"/></svg>
<div class="t" style="top:901.00px;font-size:13.51px;line-height:20px;color:#2b2b2b;letter-spacing:0.044px;left:236.70px;">Slet linje</div>
<svg class="r" style="left:316px;top:901px;" width="17" height="16" viewBox="0 0 17 16" fill="none"><rect x="1.7" y="7.5" width="9.8" height="7.6" fill="#0b7d86"/><rect x="4.4" y="10.4" width="4.2" height="2.2" fill="#fff"/><path d="M11.7 7.6V2.6H15.3V11.6L11.7 15.1Z" fill="#0b7d86"/><path d="M8.2 2.9H12" stroke="#0b7d86" stroke-width="1"/><path d="M14.7 3.3L12.3 6.2" stroke="#c8eef0" stroke-width="0.9"/><path d="M1.5 4.3H7.5M4.5 1.2999999999999998V7.3M2.38 2.18L6.62 6.42M6.62 2.18L2.38 6.42" stroke="#0b7d86" stroke-width="0.95"/><circle cx="4.5" cy="4.3" r="1.14" fill="#fff" stroke="#0b7d86" stroke-width="0.7"/></svg>
<div class="t" style="top:901.00px;font-size:13.51px;line-height:20px;color:#2b2b2b;letter-spacing:-0.342px;left:337.00px;">Vælg varer...</div>
<svg class="r" style="left:438px;top:904px;" width="16" height="11" viewBox="0 0 16 11" fill="none"><rect x="0.6" y="0.6" width="14.9" height="9.9" stroke="#0b7d86" stroke-width="1.1" fill="#eefafa"/><path d="M3 3.6H5.4M7 3.6H13M3 5.6H5.4M7 5.6H13M3 7.6H5.4M7 7.6H13" stroke="#0b7d86" stroke-width="0.9"/></svg>
<div class="t" style="top:901.00px;font-size:13.51px;line-height:20px;color:#2b2b2b;letter-spacing:0.117px;left:458.00px;">Indsæt udv. tekster</div>
<svg class="r" style="left:603px;top:902px;" width="14" height="15" viewBox="0 0 14 15" fill="none"><path d="M6.3 8.8V1.6M6.3 8.8H12.8M6.3 8.8L1.2 13.8" stroke="#0b7d86" stroke-width="1.5"/><path d="M3.8 4L6.3 1.4L8.8 4M10.5 6.3L13 8.8L10.5 11.3M1.1 10.4V13.9H4.6" stroke="#0b7d86" stroke-width="1.4"/></svg>
<div class="t" style="top:901.00px;font-size:13.51px;line-height:20px;color:#2b2b2b;letter-spacing:0.170px;left:623.00px;">Dimensioner</div>
<svg class="r" style="left:1943.2px;top:902.9px;" width="17" height="17" viewBox="0 0 17 17" fill="none"><path d="M15.5 4.7L10.6 0.9C10.4 2.6 9 4.6 7.1 5.4C5.8 6 4.5 6.3 3.2 6.3L7.1 10.9" stroke="#1c747b" stroke-width="1.05" stroke-linejoin="round"/><path d="M15.5 4.7C15.2 5.6 14.4 6.2 13.2 6.4C12.3 6.6 11.8 7 11.6 7.7M5.8 10.5L0.6 15.4" stroke="#1c747b" stroke-width="1.05"/><circle cx="11.9" cy="12.2" r="3.1" stroke="#1c747b" stroke-width="1.05"/><path d="M9.7 10L14.1 14.4" stroke="#1c747b" stroke-width="1.05"/></svg>
<div class="r" style="left:108px;top:932px;width:1862px;height:1px;background:#d2d2d2;"></div>
<div class="r" style="left:293px;top:933px;width:1px;height:56px;background:#e6e7ea;"></div>
<div class="r" style="left:108px;top:989px;width:1862px;height:1px;background:#d6d7da;"></div>
<div class="r" style="left:108px;top:1017px;width:1862px;height:1px;background:#d6d7da;"></div>
<div class="r" style="left:108px;top:1045px;width:1862px;height:1px;background:#d6d7da;"></div>
<div class="r" style="left:108px;top:1073px;width:1862px;height:1px;background:#d6d7da;"></div>
<div class="r" style="left:108px;top:1101px;width:1862px;height:1px;background:#d6d7da;"></div>
<div class="r" style="left:108px;top:989px;width:1px;height:113px;background:#d6d7da;"></div>
<div class="r" style="left:132px;top:989px;width:1px;height:113px;background:#d6d7da;"></div>
<div class="r" style="left:264px;top:989px;width:1px;height:113px;background:#d6d7da;"></div>
<div class="r" style="left:294px;top:989px;width:1px;height:113px;background:#d6d7da;"></div>
<div class="r" style="left:396px;top:989px;width:1px;height:113px;background:#d6d7da;"></div>
<div class="r" style="left:498px;top:989px;width:1px;height:113px;background:#d6d7da;"></div>
<div class="r" style="left:600px;top:989px;width:1px;height:113px;background:#d6d7da;"></div>
<div class="r" style="left:822px;top:989px;width:1px;height:113px;background:#d6d7da;"></div>
<div class="r" style="left:924px;top:989px;width:1px;height:113px;background:#d6d7da;"></div>
<div class="r" style="left:1032px;top:989px;width:1px;height:113px;background:#d6d7da;"></div>
<div class="r" style="left:1152px;top:989px;width:1px;height:113px;background:#d6d7da;"></div>
<div class="r" style="left:1254px;top:989px;width:1px;height:113px;background:#d6d7da;"></div>
<div class="r" style="left:1362px;top:989px;width:1px;height:113px;background:#d6d7da;"></div>
<div class="r" style="left:1470px;top:989px;width:1px;height:113px;background:#d6d7da;"></div>
<div class="r" style="left:1578px;top:989px;width:1px;height:113px;background:#d6d7da;"></div>
<div class="r" style="left:1680px;top:989px;width:1px;height:113px;background:#d6d7da;"></div>
<div class="r" style="left:1782px;top:989px;width:1px;height:113px;background:#d6d7da;"></div>
<div class="r" style="left:1884px;top:989px;width:1px;height:113px;background:#d6d7da;"></div>
<div class="r" style="left:265px;top:990px;width:29px;height:27px;background:#b3e7eb;"></div>
<div class="r" style="left:278.2px;top:996.4999999999999px;width:2.2px;height:2.2px;background:#12484f;border-radius:1.1px;"></div>
<div class="r" style="left:278.2px;top:1002.1999999999999px;width:2.2px;height:2.2px;background:#12484f;border-radius:1.1px;"></div>
<div class="r" style="left:278.2px;top:1007.9px;width:2.2px;height:2.2px;background:#12484f;border-radius:1.1px;"></div>
<svg class="r" style="left:113px;top:998px;" width="15" height="11" viewBox="0 0 15 11" fill="none"><path d="M0.5 5.5H13.5M9 1L13.5 5.5L9 10" stroke="#333" stroke-width="1.1"/></svg>
<div class="t" style="top:965.00px;font-size:12.06px;line-height:18px;color:#505a6c;letter-spacing:-0.367px;left:138.00px;">Type</div>
<div class="t" style="top:965.00px;font-size:12.06px;line-height:18px;color:#505a6c;letter-spacing:0.060px;left:300.00px;">Nummer</div>
<div class="t" style="top:965.00px;font-size:12.06px;line-height:18px;color:#505a6c;letter-spacing:-0.314px;left:401.70px;">Varereferenc...</div>
<div class="t" style="top:965.00px;font-size:12.06px;line-height:18px;color:#505a6c;letter-spacing:-0.100px;left:504.20px;">Variantkode</div>
<div class="t" style="top:965.00px;font-size:12.06px;line-height:18px;color:#505a6c;letter-spacing:-0.420px;left:606.20px;">Beskrivelse</div>
<div class="t" style="top:965.00px;font-size:12.06px;line-height:18px;color:#505a6c;letter-spacing:-0.108px;left:828.00px;">Lokationskode</div>
<div class="t" style="top:965.00px;font-size:12.06px;line-height:18px;color:#505a6c;letter-spacing:-0.125px;right:1544.14px;">Antal</div>
<div class="t" style="top:951.00px;font-size:12.06px;line-height:18px;color:#505a6c;letter-spacing:0.050px;right:1423.95px;">Mgd. at montere</div>
<div class="t" style="top:967.00px;font-size:12.06px;line-height:18px;color:#505a6c;letter-spacing:0.162px;right:1423.83px;">til ordre</div>
<div class="t" style="top:965.00px;font-size:12.06px;line-height:18px;color:#505a6c;letter-spacing:-0.400px;left:1158.50px;">Enhedskode</div>
<div class="t" style="top:951.00px;font-size:12.06px;line-height:18px;color:#505a6c;letter-spacing:-0.311px;right:1214.28px;">Enhedspris</div>
<div class="t" style="top:967.00px;font-size:12.06px;line-height:18px;color:#505a6c;letter-spacing:-0.250px;right:1214.25px;">ekskl. moms</div>
<div class="t" style="top:965.00px;font-size:12.06px;line-height:18px;color:#505a6c;letter-spacing:-0.069px;right:1106.07px;">Linjerabatpct.</div>
<div class="t" style="top:951.00px;font-size:12.06px;line-height:18px;color:#505a6c;letter-spacing:-0.067px;right:998.02px;">Linjebeløb</div>
<div class="t" style="top:967.00px;font-size:12.06px;line-height:18px;color:#505a6c;letter-spacing:-0.250px;right:998.25px;">ekskl. moms</div>
<div class="t" style="top:951.00px;font-size:12.06px;line-height:18px;color:#505a6c;letter-spacing:0.008px;right:896.02px;">Subscription-</div>
<div class="t" style="top:967.00px;font-size:12.06px;line-height:18px;color:#505a6c;letter-spacing:0.100px;right:895.93px;">linjer</div>
<div class="t" style="top:935.00px;font-size:12.06px;line-height:18px;color:#505a6c;letter-spacing:0.014px;left:1686.30px;">Debitors</div>
<div class="t" style="top:951.00px;font-size:12.06px;line-height:18px;color:#505a6c;letter-spacing:0.008px;left:1686.30px;">Subscription-</div>
<div class="t" style="top:967.00px;font-size:12.06px;line-height:18px;color:#505a6c;letter-spacing:0.020px;left:1686.30px;">kontraktnr.</div>
<div class="t" style="top:935.00px;font-size:12.06px;line-height:18px;color:#505a6c;letter-spacing:-0.100px;left:1788.00px;">Kreditors</div>
<div class="t" style="top:951.00px;font-size:12.06px;line-height:18px;color:#505a6c;letter-spacing:0.008px;left:1788.00px;">Subscription-</div>
<div class="t" style="top:967.00px;font-size:12.06px;line-height:18px;color:#505a6c;letter-spacing:0.020px;left:1788.00px;">kontraktnr.</div>
<div class="r" style="left:0;top:0;width:1970px;height:1240px;overflow:hidden;"><div class="t" style="top:951.00px;font-size:12.06px;line-height:18px;color:#505a6c;letter-spacing:-0.457px;left:1914.40px;">Antal, der skal</div><div class="t" style="top:967.00px;font-size:12.06px;line-height:18px;color:#505a6c;letter-spacing:-0.786px;left:1951.30px;">tildeles</div></div>
<div class="t" style="top:995.00px;font-size:13.51px;line-height:20px;color:#212121;letter-spacing:-0.500px;left:139.00px;">Vare</div>
<div class="t" style="top:995.00px;font-size:13.51px;line-height:20px;color:#212121;letter-spacing:-0.120px;left:301.20px;">1896-S</div>
<div class="t" style="top:995.00px;font-size:13.51px;line-height:20px;color:#212121;letter-spacing:-0.040px;left:606.80px;">ATHEN Skrivebord</div>
<div class="t" style="top:995.00px;font-size:13.51px;line-height:20px;color:#212121;right:1542.49px;">1</div>
<div class="t" style="top:995.00px;font-size:13.51px;line-height:20px;color:#212121;right:1421.99px;">0</div>
<div class="t" style="top:995.00px;font-size:13.51px;line-height:20px;color:#212121;letter-spacing:-0.900px;left:1158.70px;">STK</div>
<div class="t" style="top:995.00px;font-size:13.51px;line-height:20px;color:#212121;letter-spacing:-0.229px;right:1212.25px;">5.560,00</div>
<div class="t" style="top:995.00px;font-size:13.51px;line-height:20px;color:#212121;letter-spacing:-0.229px;right:996.25px;">5.560,00</div>
<div class="t" style="top:995.00px;font-size:13.51px;line-height:20px;color:#00757d;right:893.99px;">0</div>
<div class="t" style="top:995.00px;font-size:13.51px;line-height:20px;color:#00757d;left:1687.00px;">_</div>
<div class="t" style="top:995.00px;font-size:13.51px;line-height:20px;color:#00757d;left:1788.30px;">_</div>
<div class="r" style="left:108px;top:1103.5px;width:1270px;height:10.5px;background:#a6a6a6;border-radius:5.5px;"></div>
<div class="t" style="top:1147.00px;font-size:13.51px;line-height:20px;color:#505a6c;letter-spacing:0.004px;left:108.00px;">Subtotal ekskl. moms (DKK)</div>
<div class="r dl" style="left:284.2px;top:1155.0px;width:66.0px;height:2px;"></div>
<div class="r" style="left:363px;top:1141px;width:339px;height:28.5px;background:#ebecee;"></div>
<div class="t" style="top:1147.00px;font-size:13.51px;line-height:20px;color:#212121;letter-spacing:-0.229px;right:1863.25px;">5.560,00</div>
<div class="t" style="top:1185.00px;font-size:13.51px;line-height:20px;color:#505a6c;letter-spacing:0.009px;left:108.00px;">Fakturarabatbeløb ekskl. moms (DKK)</div>
<div class="r dl" style="left:348.2px;top:1193.0px;width:2.0px;height:2px;"></div>
<div class="r" style="left:363px;top:1179px;width:339px;height:29px;background:#fff;border:1px solid #8d8f95;"></div>
<div class="t" style="top:1185.00px;font-size:13.51px;line-height:20px;color:#212121;letter-spacing:-0.267px;right:1863.28px;">0,00</div>
<div class="r" style="left:997px;top:1170px;width:339px;height:29px;background:#ebecee;"></div>
<div class="t" style="top:1176.00px;font-size:13.51px;line-height:20px;color:#505a6c;letter-spacing:-0.027px;left:742.20px;">I alt ekskl. moms (DKK)</div>
<div class="r dl" style="left:894.2px;top:1184.2px;width:90.0px;height:2px;"></div>
<div class="t" style="top:1176.00px;font-size:13.51px;line-height:20px;color:#212121;letter-spacing:-0.229px;right:1229.25px;">5.560,00</div>
<div class="t" style="top:1147.00px;font-size:13.51px;line-height:20px;color:#505a6c;letter-spacing:0.027px;left:742.20px;">Fakturarabat i %</div>
<div class="r dl" style="left:854.2px;top:1155.0px;width:130.0px;height:2px;"></div>
<div class="r" style="left:997px;top:1141px;width:339px;height:29px;background:#fff;border:1px solid #8d8f95;"></div>
<div class="t" style="top:1147.00px;font-size:13.51px;line-height:20px;color:#212121;right:1228.99px;">0</div>
<div class="t" style="top:1147.00px;font-size:13.51px;line-height:20px;color:#505a6c;letter-spacing:0.093px;left:1376.20px;">Moms i alt (DKK)</div>
<div class="r dl" style="left:1488.2px;top:1155.0px;width:130.0px;height:2px;"></div>
<div class="r" style="left:1631px;top:1141px;width:339px;height:28.5px;background:#ebecee;"></div>
<div class="t" style="top:1147.00px;font-size:13.51px;line-height:20px;color:#212121;letter-spacing:-0.229px;right:595.25px;">1.390,00</div>
<div class="t" style="top:1185.00px;font-size:13.51px;line-height:20px;color:#505a6c;letter-spacing:0.043px;left:1376.20px;">I alt inkl. moms (DKK)</div>
<div class="r dl" style="left:1520.2px;top:1193.0px;width:98.0px;height:2px;"></div>
<div class="r" style="left:1631px;top:1179px;width:339px;height:28.5px;background:#ebecee;"></div>
<div class="t" style="top:1185.00px;font-size:13.51px;line-height:20px;color:#212121;letter-spacing:-0.229px;right:595.25px;">6.950,00</div>
<div class="r" style="left:1999px;top:195px;width:453px;height:52px;background:#fff;border:1px solid #e0e1e5;border-radius:6px;"></div>
<svg class="r" style="left:2016px;top:214px;" width="16" height="14" viewBox="0 0 16 14" fill="none"><g stroke="#262626" stroke-width="1.0" stroke-linejoin="round" stroke-linecap="round" fill="none"><path d="M4.3 0.5H8.2L6.1 10.1L1.7 9.5Q0.1 9.2 0.6 7.7L2.7 1.5Q3.1 0.5 4.3 0.5Z" fill="none"/><path d="M8.2 0.5H10Q11.3 0.5 11.5 1.7L11.9 3.9"/><g transform="rotate(180 8 6.95)"><path d="M4.3 0.5H8.2L6.1 10.1L1.7 9.5Q0.1 9.2 0.6 7.7L2.7 1.5Q3.1 0.5 4.3 0.5Z" fill="none"/><path d="M8.2 0.5H10Q11.3 0.5 11.5 1.7L11.9 3.9"/></g></g></svg>
<div class="t" style="top:209.00px;font-size:16.49px;line-height:25px;color:#1f1f1f;font-weight:bold;letter-spacing:-0.880px;left:2040.70px;-webkit-text-stroke:0.1px #fff;">Opsummering</div>
<div class="r" style="left:2152px;top:213.5px;width:83px;height:15.5px;background:#eef0f2;border:1px solid #dcdee2;border-radius:8px;"></div>
<div class="t" style="top:213.00px;font-size:10.62px;line-height:16px;color:#505a6c;letter-spacing:-0.364px;left:2156.50px;">Forhåndsversion</div>
<svg class="r" style="left:2418.0px;top:218.5px;" width="14" height="8" viewBox="0 0 14 8" fill="none"><path d="M1 1 L7.0 7 L13 1" stroke="#444" stroke-width="1.2"/></svg>
<div class="r" style="left:1999px;top:257px;width:453px;height:1000px;background:#fff;border:1px solid #e0e1e5;border-radius:6px;"></div>
<svg class="r" style="left:2023px;top:271px;" width="18" height="18" viewBox="0 0 18 18" fill="none"><circle cx="9" cy="8.9" r="7.6" stroke="#1c8088" stroke-width="1"/><path d="M9 7.3V12.8" stroke="#3d8d94" stroke-width="1.2"/><circle cx="9" cy="5.4" r="0.8" fill="#3d8d94"/></svg>
<div class="t" style="top:270.00px;font-size:14.06px;line-height:21px;color:#1f1f1f;font-weight:bold;letter-spacing:-0.371px;left:2050.60px;">Detaljer</div>
<div class="r" style="left:2024px;top:299px;width:76px;height:3px;background:#007a84;border-radius:1.5px;"></div>
<svg class="r" style="left:2122.4px;top:270px;" width="20" height="20" viewBox="0 0 20 20" fill="none"><g transform="rotate(-47 10 10) translate(2 6.2)"><path d="M1.6 0.5H12.4A3.25 3.25 0 0 1 12.4 7H3.4A2.1 2.1 0 0 1 3.4 2.8H11.6" stroke="#4a4a4a" stroke-width="1"/></g></svg>
<div class="t" style="top:270.00px;font-size:13.99px;line-height:21px;color:#3a3a3a;letter-spacing:-0.074px;left:2152.30px;">Vedhæftede filer (0)</div>
<div class="t" style="top:316.00px;font-size:17.46px;line-height:26px;color:#1f1f1f;font-weight:bold;letter-spacing:-0.224px;left:2020.40px;-webkit-text-stroke:0.1px #fff;">SMARTpdf modtagere</div>
<svg class="r" style="left:2203.5px;top:325.75px;" width="15" height="8.5" viewBox="0 0 15 8.5" fill="none"><path d="M1 1 L7.5 7.5 L14 1" stroke="#333" stroke-width="1.2"/></svg>
<div class="r" style="left:2020px;top:348px;width:411px;height:185.5px;background:#f5f6f8;"></div>
<div class="t" style="top:381.00px;font-size:11.58px;line-height:17px;color:#535a6b;letter-spacing:-0.300px;left:2026.00px;">God...</div>
<div class="t" style="top:364.00px;font-size:11.58px;line-height:17px;color:#535a6b;letter-spacing:-0.167px;left:2110.30px;">Send</div>
<div class="t" style="top:382.00px;font-size:11.58px;line-height:17px;color:#535a6b;letter-spacing:-0.120px;left:2110.30px;">dok...</div>
<div class="t" style="top:381.00px;font-size:11.58px;line-height:17px;color:#535a6b;letter-spacing:0.314px;left:2164.40px;">Dokument</div>
<div class="t" style="top:381.00px;font-size:11.58px;line-height:17px;color:#535a6b;letter-spacing:-0.060px;left:2254.20px;">E-mail</div>
<svg class="r" style="left:2222.5px;top:383px;" width="7" height="11" viewBox="0 0 7 11" fill="none"><path d="M3.5 10.5V1M0.8 3.6L3.5 0.9L6.2 3.6" stroke="#505a6c" stroke-width="1"/></svg>
<svg class="r" style="left:2290px;top:383px;" width="7" height="11" viewBox="0 0 7 11" fill="none"><path d="M3.5 10.5V1M0.8 3.6L3.5 0.9L6.2 3.6" stroke="#505a6c" stroke-width="1"/></svg>
<div class="r" style="left:2020px;top:404px;width:411px;height:1px;background:#c6c8cc;"></div>
<div class="r" style="left:2020px;top:437px;width:411px;height:1px;background:#dcdde0;"></div>
<div class="r" style="left:2075px;top:405px;width:30px;height:32px;background:#aee5e9;"></div>
<div class="r" style="left:2088.7px;top:414.59999999999997px;width:2.2px;height:2.2px;background:#12484f;border-radius:1.1px;"></div>
<div class="r" style="left:2088.7px;top:420.29999999999995px;width:2.2px;height:2.2px;background:#12484f;border-radius:1.1px;"></div>
<div class="r" style="left:2088.7px;top:425.99999999999994px;width:2.2px;height:2.2px;background:#12484f;border-radius:1.1px;"></div>
<div class="r" style="left:2042px;top:415px;width:13px;height:13px;background:#f8f9fa;border:1px solid #cbcdd2;border-radius:2.5px;"></div>
<div class="r" style="left:2126px;top:415px;width:13px;height:13px;background:#f8f9fa;border:1px solid #cbcdd2;border-radius:2.5px;"></div>
<div class="t" style="top:412.00px;font-size:13.51px;line-height:20px;color:#212121;letter-spacing:0.200px;left:2165.50px;">Tilbud</div>
<div class="t" style="top:412.00px;font-size:13.51px;line-height:20px;color:#212121;letter-spacing:0.257px;left:2255.20px;">indkob@kunde.dk</div>
<div class="r" style="left:2020px;top:548px;width:411px;height:2px;background:#b4b7be;"></div>
<div class="t" style="top:564.00px;font-size:17.46px;line-height:26px;color:#1f1f1f;font-weight:bold;letter-spacing:-0.524px;left:2020.40px;-webkit-text-stroke:0.1px #fff;">Kundesalgsoversigt</div>
<div class="t" style="top:616.00px;font-size:13.51px;line-height:20px;color:#505a6c;letter-spacing:0.156px;left:2020.40px;">Debitornr.</div>
<div class="t" style="top:616.00px;font-size:13.51px;line-height:20px;color:#00757d;letter-spacing:-0.025px;right:129.06px;">20000</div>
<div class="r" style="left:2020px;top:658px;width:90px;height:90px;background:#00848f;"></div>
<div class="t" style="top:665.00px;font-size:23.64px;line-height:36px;color:#ffffff;right:459.45px;-webkit-text-stroke:0.55px #00848f;">2</div>
<div class="t" style="top:716.00px;font-size:11.58px;line-height:17px;color:#fff;letter-spacing:-0.245px;left:2026.20px;">Igangværende</div>
<div class="t" style="top:730.00px;font-size:11.58px;line-height:17px;color:#fff;letter-spacing:-0.070px;left:2026.20px;">salgstilbud</div>
<div class="r" style="left:2114px;top:658px;width:90px;height:90px;background:#00848f;"></div>
<div class="t" style="top:664.00px;font-size:23.64px;line-height:36px;color:#ffffff;right:365.45px;-webkit-text-stroke:0.55px #00848f;">0</div>
<div class="t" style="top:702.00px;font-size:11.58px;line-height:17px;color:#fff;letter-spacing:-0.245px;left:2120.20px;">Igangværende</div>
<div class="t" style="top:716.00px;font-size:11.58px;line-height:17px;color:#fff;letter-spacing:-0.233px;left:2120.20px;">salgsrammeord</div>
<div class="t" style="top:730.00px;font-size:11.58px;line-height:17px;color:#fff;letter-spacing:-0.100px;left:2120.20px;">rer</div>
<div class="r" style="left:2208px;top:658px;width:90px;height:90px;background:#00848f;"></div>
<div class="t" style="top:665.00px;font-size:23.64px;line-height:36px;color:#ffffff;right:271.45px;-webkit-text-stroke:0.55px #00848f;">0</div>
<div class="t" style="top:716.00px;font-size:11.58px;line-height:17px;color:#fff;letter-spacing:-0.245px;left:2214.20px;">Igangværende</div>
<div class="t" style="top:730.00px;font-size:11.58px;line-height:17px;color:#fff;letter-spacing:-0.190px;left:2214.20px;">salgsordrer</div>
<div class="r" style="left:2302px;top:658px;width:90px;height:90px;background:#00848f;"></div>
<div class="t" style="top:665.00px;font-size:23.64px;line-height:36px;color:#ffffff;right:177.45px;-webkit-text-stroke:0.55px #00848f;">3</div>
<div class="t" style="top:716.00px;font-size:11.58px;line-height:17px;color:#fff;letter-spacing:-0.245px;left:2308.20px;">Igangværende</div>
<div class="t" style="top:730.00px;font-size:11.58px;line-height:17px;color:#fff;letter-spacing:-0.169px;left:2308.20px;">salgsfakturaer</div>
<div class="r" style="left:2020px;top:752px;width:90px;height:90px;background:#00848f;"></div>
<div class="t" style="top:758.00px;font-size:23.64px;line-height:36px;color:#ffffff;right:459.45px;-webkit-text-stroke:0.55px #00848f;">0</div>
<div class="t" style="top:796.00px;font-size:11.58px;line-height:17px;color:#fff;letter-spacing:-0.245px;left:2026.20px;">Igangværende</div>
<div class="t" style="top:810.00px;font-size:11.58px;line-height:17px;color:#fff;letter-spacing:-0.236px;left:2026.20px;">salgsreturvareo</div>
<div class="t" style="top:824.00px;font-size:11.58px;line-height:17px;color:#fff;letter-spacing:0.000px;left:2026.20px;">rdrer</div>
<div class="r" style="left:2114px;top:752px;width:90px;height:90px;background:#00848f;"></div>
<div class="t" style="top:758.00px;font-size:23.64px;line-height:36px;color:#ffffff;right:365.45px;-webkit-text-stroke:0.55px #00848f;">0</div>
<div class="t" style="top:796.00px;font-size:11.58px;line-height:17px;color:#fff;letter-spacing:-0.245px;left:2120.20px;">Igangværende</div>
<div class="t" style="top:810.00px;font-size:11.58px;line-height:17px;color:#fff;letter-spacing:-0.143px;left:2120.20px;">salgskreditnota</div>
<div class="t" style="top:824.00px;font-size:11.58px;line-height:17px;color:#fff;letter-spacing:-0.300px;left:2120.20px;">er</div>
<div class="r" style="left:2208px;top:752px;width:90px;height:90px;background:#00848f;"></div>
<div class="t" style="top:759.00px;font-size:23.64px;line-height:36px;color:#ffffff;letter-spacing:-0.800px;right:272.31px;-webkit-text-stroke:0.55px #00848f;">66</div>
<div class="t" style="top:810.00px;font-size:11.58px;line-height:17px;color:#fff;letter-spacing:-0.250px;left:2214.20px;">Bogf.</div>
<div class="t" style="top:824.00px;font-size:11.58px;line-height:17px;color:#fff;letter-spacing:-0.329px;left:2214.20px;">salgsleverancer</div>
<div class="r" style="left:2302px;top:752px;width:90px;height:90px;background:#00848f;"></div>
<div class="t" style="top:759.00px;font-size:23.64px;line-height:36px;color:#ffffff;letter-spacing:-0.800px;right:178.31px;-webkit-text-stroke:0.55px #00848f;">66</div>
<div class="t" style="top:810.00px;font-size:11.58px;line-height:17px;color:#fff;letter-spacing:-0.250px;left:2308.20px;">Bogf.</div>
<div class="t" style="top:824.00px;font-size:11.58px;line-height:17px;color:#fff;letter-spacing:-0.169px;left:2308.20px;">salgsfakturaer</div>
<div class="r" style="left:2020px;top:846px;width:90px;height:90px;background:#00848f;"></div>
<div class="t" style="top:852.00px;font-size:23.64px;line-height:36px;color:#ffffff;right:459.45px;-webkit-text-stroke:0.55px #00848f;">0</div>
<div class="t" style="top:890.00px;font-size:11.58px;line-height:17px;color:#fff;letter-spacing:0.014px;left:2026.20px;">Bogførte</div>
<div class="t" style="top:904.00px;font-size:11.58px;line-height:17px;color:#fff;letter-spacing:-0.214px;left:2026.20px;">salgsreturvarem</div>
<div class="t" style="top:918.00px;font-size:11.58px;line-height:17px;color:#fff;letter-spacing:-0.122px;left:2026.20px;">odtagelser</div>
<div class="r" style="left:2114px;top:846px;width:90px;height:90px;background:#00848f;"></div>
<div class="t" style="top:853.00px;font-size:23.64px;line-height:36px;color:#ffffff;right:365.45px;-webkit-text-stroke:0.55px #00848f;">1</div>
<div class="t" style="top:904.00px;font-size:11.58px;line-height:17px;color:#fff;letter-spacing:-0.250px;left:2120.20px;">Bogf.</div>
<div class="t" style="top:918.00px;font-size:11.58px;line-height:17px;color:#fff;letter-spacing:-0.238px;left:2120.20px;">salgskr.notaer</div>
<div class="r" style="left:2208px;top:846px;width:90px;height:90px;background:#00848f;"></div>
<div class="t" style="top:852.00px;font-size:23.64px;line-height:36px;color:#ffffff;right:271.45px;-webkit-text-stroke:0.55px #00848f;">0</div>
<div class="t" style="top:890.00px;font-size:11.58px;line-height:17px;color:#fff;letter-spacing:-0.086px;left:2214.20px;">Debitors</div>
<div class="t" style="top:904.00px;font-size:11.58px;line-height:17px;color:#fff;letter-spacing:-0.092px;left:2214.20px;">Subscription-</div>
<div class="t" style="top:918.00px;font-size:11.58px;line-height:17px;color:#fff;letter-spacing:0.000px;left:2214.20px;">kontrakter</div>
<div class="r" style="left:2302px;top:846px;width:90px;height:90px;background:#00848f;"></div>
<div class="t" style="top:853.00px;font-size:23.64px;line-height:36px;color:#ffffff;right:177.45px;-webkit-text-stroke:0.55px #00848f;">0</div>
<div class="t" style="top:918.00px;font-size:11.58px;line-height:17px;color:#fff;letter-spacing:-0.167px;left:2308.20px;">Subscriptions</div>
<div class="r" style="left:2020px;top:958px;width:411px;height:2px;background:#b4b7be;"></div>
<div class="t" style="top:974.00px;font-size:17.46px;line-height:26px;color:#1f1f1f;font-weight:bold;letter-spacing:-0.359px;left:2020.30px;-webkit-text-stroke:0.1px #fff;">Salgslinjedetaljer</div>
<div class="t" style="top:1026.00px;font-size:13.51px;line-height:20px;color:#505a6c;letter-spacing:-0.267px;left:2020.30px;">Varenr.</div>
<div class="t" style="top:1026.00px;font-size:13.51px;line-height:20px;color:#00757d;letter-spacing:-0.120px;right:129.16px;">1896-S</div>
<div class="t" style="top:1055.00px;font-size:13.51px;line-height:20px;color:#505a6c;letter-spacing:-0.031px;left:2020.30px;">Påkrævet antal</div>
<div class="t" style="top:1055.00px;font-size:13.51px;line-height:20px;color:#212121;right:128.99px;">1</div>
<div class="t" style="top:1085.00px;font-size:13.51px;line-height:20px;color:#505a6c;letter-spacing:0.283px;left:2020.30px;">Subscription-linjer</div>
<div class="t" style="top:1085.00px;font-size:13.51px;line-height:20px;color:#00757d;right:128.99px;">0</div>
<div class="t" style="top:1128.00px;font-size:13.58px;line-height:20px;color:#1f1f1f;font-weight:bold;letter-spacing:-0.013px;left:2020.30px;">Vedhæftede filer</div>
<div class="t" style="top:1151.00px;font-size:13.51px;line-height:20px;color:#505a6c;letter-spacing:-0.125px;left:2020.30px;">Bilag</div>
<div class="t" style="top:1151.00px;font-size:13.51px;line-height:20px;color:#00757d;right:128.99px;">0</div>
<div class="t" style="top:1195.00px;font-size:13.58px;line-height:20px;color:#1f1f1f;font-weight:bold;letter-spacing:-0.170px;left:2020.30px;">Disponering</div>
<div class="t" style="top:1218.00px;font-size:13.51px;line-height:20px;color:#505a6c;letter-spacing:0.043px;left:2020.30px;">Afsendelsesdato</div>
<div class="t" style="top:1218.00px;font-size:13.51px;line-height:20px;color:#212121;letter-spacing:0.322px;right:128.68px;">28-11-2025</div>
</div></body></html>
